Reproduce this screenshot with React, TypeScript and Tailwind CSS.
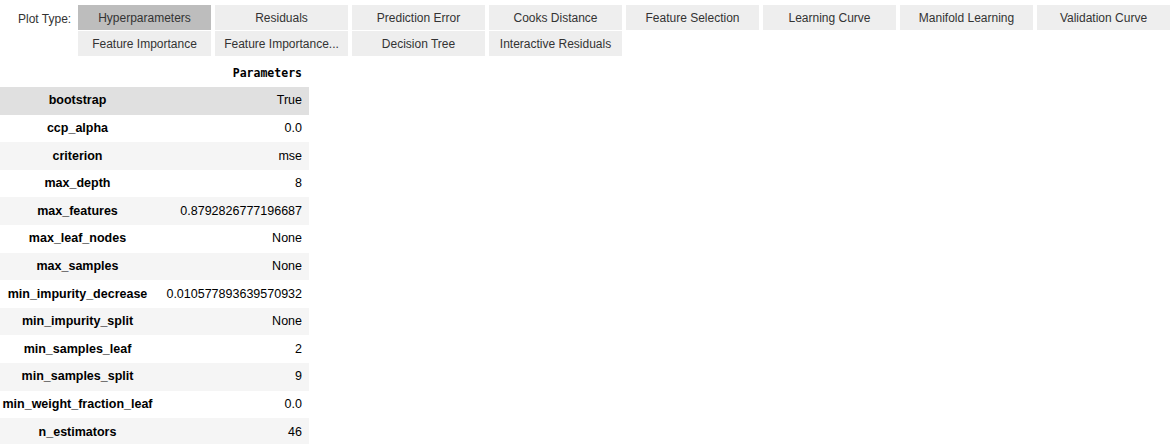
const plotTypes = [
  "Hyperparameters",
  "Residuals",
  "Prediction Error",
  "Cooks Distance",
  "Feature Selection",
  "Learning Curve",
  "Manifold Learning",
  "Validation Curve",
  "Feature Importance",
  "Feature Importance...",
  "Decision Tree",
  "Interactive Residuals",
];

const params: [string, string][] = [
  ["bootstrap", "True"],
  ["ccp_alpha", "0.0"],
  ["criterion", "mse"],
  ["max_depth", "8"],
  ["max_features", "0.8792826777196687"],
  ["max_leaf_nodes", "None"],
  ["max_samples", "None"],
  ["min_impurity_decrease", "0.010577893639570932"],
  ["min_impurity_split", "None"],
  ["min_samples_leaf", "2"],
  ["min_samples_split", "9"],
  ["min_weight_fraction_leaf", "0.0"],
  ["n_estimators", "46"],
];

export default function App() {
  const selected = "Hyperparameters";

  return (
    <div className="w-[1176px] h-[444px] bg-white overflow-hidden font-['Liberation_Sans',Arial,sans-serif] text-[12px]">
      <div className="flex pt-[5px]">
        <div className="w-[69px] pl-[18px] pt-[5px] text-[#333] whitespace-nowrap">
          Plot Type:
        </div>
        <div className="ml-[9px] grid grid-cols-[repeat(8,133px)] gap-x-[4px] gap-y-[1px]">
          {plotTypes.map((p) => (
            <button
              key={p}
              className={`h-[25px] px-2 text-[#333] whitespace-nowrap overflow-hidden ${
                p === selected ? "bg-[#bdbdbd]" : "bg-[#eeeeee]"
              }`}
            >
              {p}
            </button>
          ))}
        </div>
      </div>

      <table className="mt-[4px] w-[309px] border-collapse text-black text-[12.5px]">
        <thead>
          <tr className="h-[27px]">
            <th className="w-[155px]"></th>
            <th className="pr-[7px] text-right font-['DejaVu_Sans_Mono',monospace] text-[11.5px] font-bold">
              Parameters
            </th>
          </tr>
        </thead>
        <tbody>
          {params.map(([k, v], i) => (
            <tr
              key={k}
              className={`h-[27.6px] ${
                i === 0 ? "bg-[#e0e0e0]" : i % 2 === 0 ? "bg-[#f5f5f5]" : "bg-white"
              }`}
            >
              <td className="text-center font-bold whitespace-nowrap">{k}</td>
              <td className="text-right pr-[7px] whitespace-nowrap">{v}</td>
            </tr>
          ))}
        </tbody>
      </table>
    </div>
  );
}
